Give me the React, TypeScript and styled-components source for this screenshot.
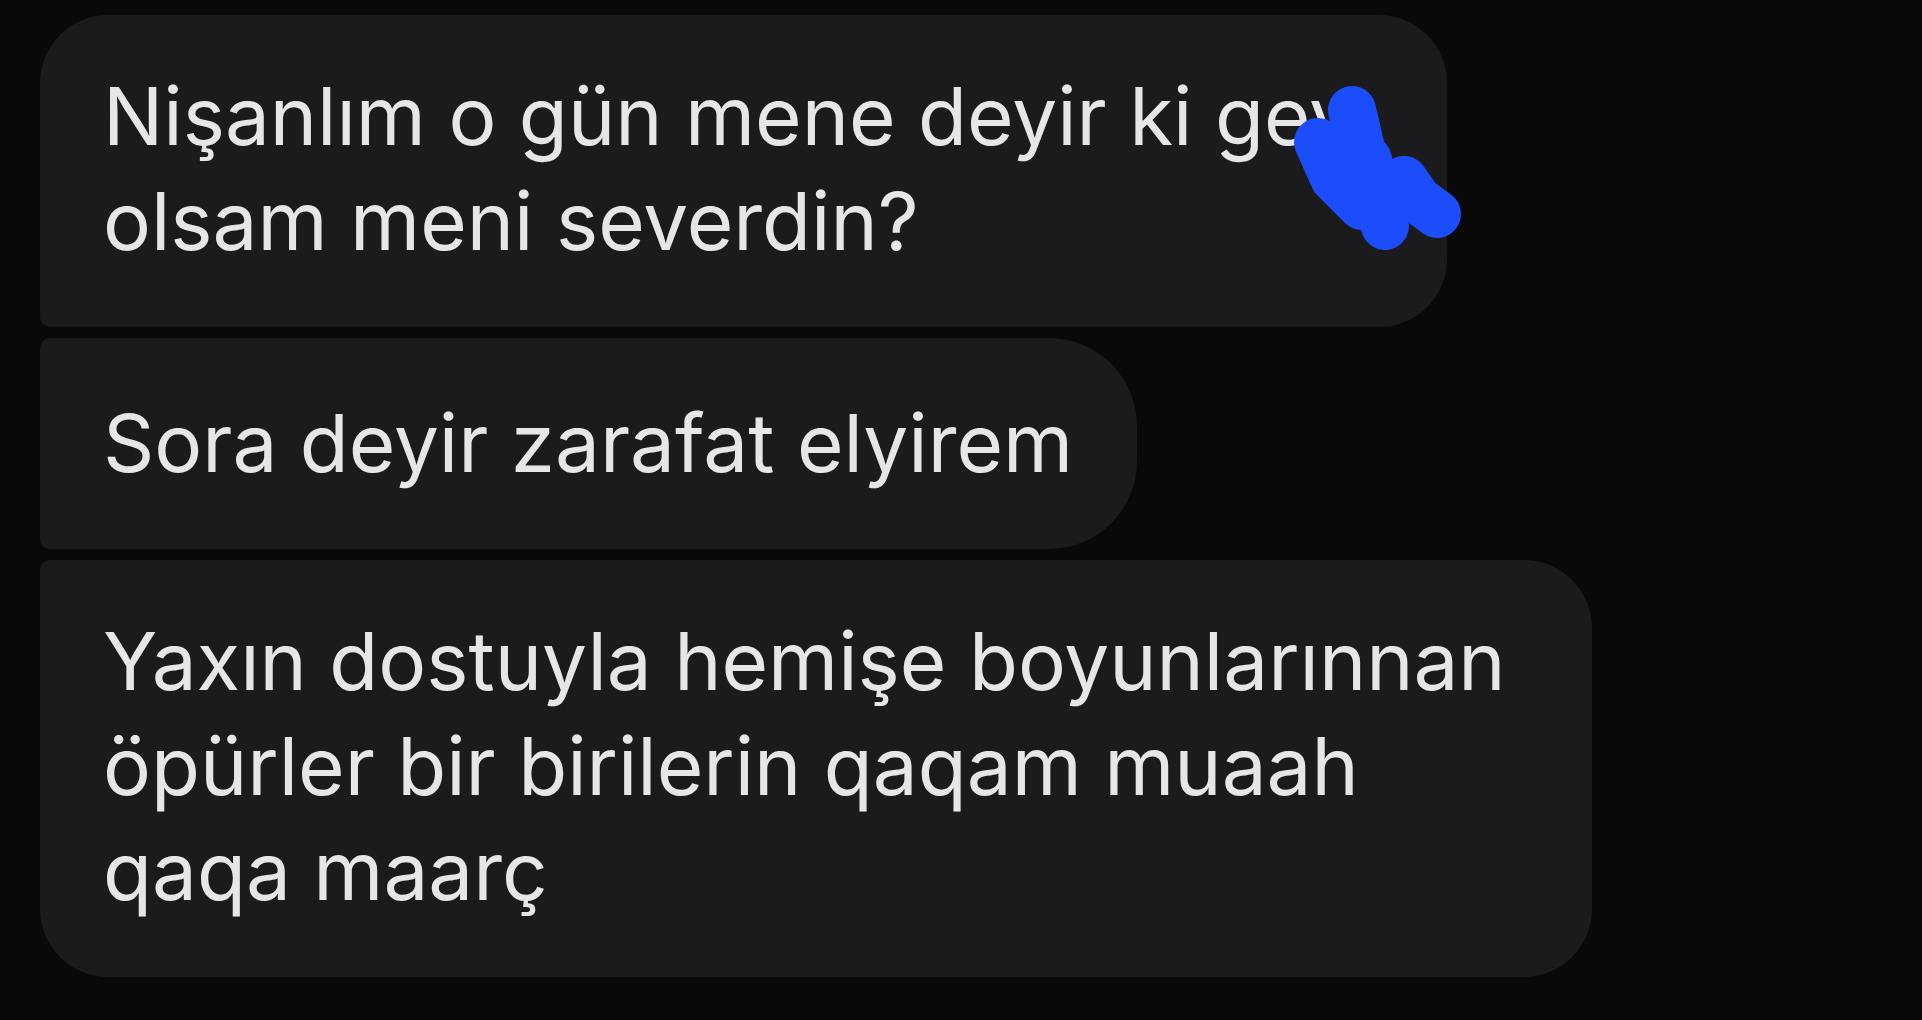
import React from "react";
import styled, { createGlobalStyle } from "styled-components";

const GlobalStyle = createGlobalStyle`
  html, body {
    margin: 0;
    padding: 0;
    background: #090909;
  }
  body {
    width: 1922px;
    height: 1020px;
    overflow: hidden;
  }
`;

const Screen = styled.div`
  width: 1922px;
  height: 1020px;
  box-sizing: border-box;
  background: #090909;
  padding: 15px 0 0 40px;
  display: flex;
  flex-direction: column;
  align-items: flex-start;
  gap: 11px;
`;

type Corner = "first" | "middle" | "last";

const BIG = 68;
const SMALL = 10;

const radius = (pos: Corner) => {
  if (pos === "first") return `${BIG}px ${BIG}px ${BIG}px ${SMALL}px`;
  if (pos === "middle") return `${SMALL}px ${BIG + 20}px ${BIG + 20}px ${SMALL}px`;
  return `${SMALL}px ${BIG}px ${BIG}px ${BIG}px`;
};

const Bubble = styled.div<{ $pos: Corner; $w: number; $pt?: number }>`
  position: relative;
  box-sizing: border-box;
  width: ${(p) => p.$w}px;
  background: #1b1b1d;
  border-radius: ${(p) => radius(p.$pos)};
  padding: ${(p) => p.$pt ?? 48}px 40px 54px 63px;
  color: #e6e6e8;
  font-family: Inter, "Noto Sans", "Liberation Sans", sans-serif;
  font-size: 80px;
  line-height: 105px;
  letter-spacing: 0;
  white-space: nowrap;
`;

const Line = styled.div`
  display: block;
`;

const Scribble = styled.svg`
  position: absolute;
  left: 1200px;
  top: 45px;
  width: 240px;
  height: 220px;
  overflow: visible;
  pointer-events: none;
`;

export default function App() {
  return (
    <>
      <GlobalStyle />
      <Screen>
        <Bubble $pos="first" $w={1407}>
          <Line>Nişanlım o gün mene deyir ki gey</Line>
          <Line>olsam meni severdin?</Line>
          <Scribble viewBox="1240 60 240 220">
            <g
              fill="none"
              stroke="#1c4dfb"
              strokeWidth={48}
              strokeLinecap="round"
              strokeLinejoin="round"
            >
              <path d="M1352 110 L1366 170 L1385 226" />
              <path d="M1318 142 L1334 178 L1362 206" />
              <path d="M1336 150 L1368 160 L1378 200" />
              <path d="M1368 204 L1406 196" />
              <path d="M1404 180 L1418 200 L1437 214" />
            </g>
          </Scribble>
        </Bubble>
        <Bubble $pos="middle" $w={1097} $pt={52}>
          <Line>Sora deyir zarafat elyirem</Line>
        </Bubble>
        <Bubble $pos="last" $w={1552}>
          <Line>Yaxın dostuyla hemişe boyunlarınnan</Line>
          <Line>öpürler bir birilerin qaqam muaah</Line>
          <Line>qaqa maarç</Line>
        </Bubble>
      </Screen>
    </>
  );
}
